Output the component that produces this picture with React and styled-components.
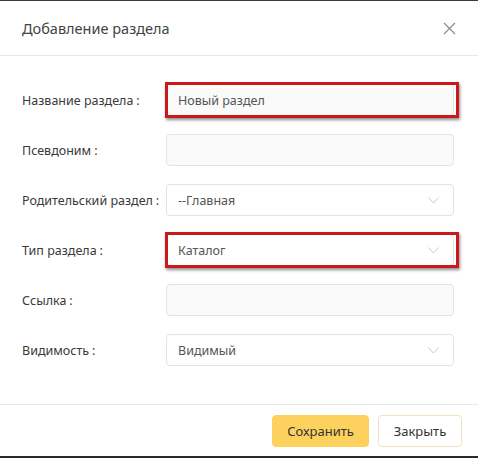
import React from 'react';
import styled, { createGlobalStyle } from 'styled-components';

const GlobalStyle = createGlobalStyle`
	*, *::before, *::after {
		box-sizing: border-box;
	}
	html, body {
		margin: 0;
		padding: 0;
		background: #fff;
	}
	body {
		font-family: "Noto Sans", "Open Sans", sans-serif;
		color: #333;
	}
`;

const Modal = styled.div`
	width: 478px;
	height: 458px;
	border-top: 1px solid #3c3c3c;
	border-bottom: 2px solid #2a2a2a;
	display: flex;
	flex-direction: column;
	background: #fff;
`;

const Header = styled.div`
	height: 55px;
	flex-shrink: 0;
	display: flex;
	align-items: center;
	justify-content: space-between;
	padding: 0 21px 0 22px;
	border-bottom: 1px solid #e8e8e8;
`;

const Title = styled.div`
	font-size: 14.5px;
	color: #444;
`;

const CloseButton = styled.button`
	border: 0;
	background: none;
	padding: 0;
	width: 16px;
	height: 16px;
	display: flex;
	align-items: center;
	justify-content: center;
	cursor: pointer;
`;

const Body = styled.div`
	flex: 1;
	display: flex;
	flex-direction: column;
	gap: 18px;
	padding: 28px 24px 0 22px;
`;

const Row = styled.div`
	display: flex;
	align-items: center;
	height: 32px;
`;

const Label = styled.label`
	width: 144px;
	font-size: 12.5px;
	color: #3a3a3a;
	white-space: nowrap;

	> span {
		margin-left: 3px;
	}
`;

const Field = styled.div`
	position: relative;
	flex: 1;
	height: 32px;

	${p => p.$marked && `
		&::after {
			content: '';
			position: absolute;
			left: -1px;
			right: -5px;
			top: -2px;
			bottom: -2px;
			border: 3px solid #c8191c;
			box-shadow: 1px 2px 3px rgba(0, 0, 0, 0.45);
			pointer-events: none;
		}
	`}
`;

const Input = styled.div`
	height: 32px;
	display: flex;
	align-items: center;
	justify-content: space-between;
	padding: 0 14px 0 11px;
	border: 1px solid #e3e3e3;
	border-radius: 4px;
	background: ${p => (p.$select ? '#fff' : '#fafafa')};
	font-size: 12.5px;
	color: #555;
`;

const Footer = styled.div`
	height: 52px;
	flex-shrink: 0;
	border-top: 1px solid #e8e8e8;
	display: flex;
	align-items: flex-start;
	justify-content: flex-end;
	gap: 9px;
	padding: 10px 16px 0 0;
`;

const Button = styled.button`
	height: 32px;
	padding: 0;
	width: ${p => p.$w}px;
	border-radius: 4px;
	font-family: inherit;
	font-size: 13px;
	color: #333;
	cursor: pointer;
	border: 1px solid ${p => (p.$primary ? '#fcd15d' : '#efe2bd')};
	background: ${p => (p.$primary ? '#fcd15d' : '#fff')};
`;

const Chevron = () => (
	<svg width="11" height="7" viewBox="0 0 11 7">
		<path d="M0.5 0.5 L5.5 6 L10.5 0.5" fill="none" stroke="#c8c8c8" strokeWidth="1" />
	</svg>
);

const rows = [
	{ label: 'Название раздела', value: 'Новый раздел', marked: true },
	{ label: 'Псевдоним', value: '' },
	{ label: 'Родительский раздел', value: '--Главная', select: true },
	{ label: 'Тип раздела', value: 'Каталог', select: true, marked: true },
	{ label: 'Ссылка', value: '' },
	{ label: 'Видимость', value: 'Видимый', select: true },
];

export default function App() {
	return (
		<>
			<GlobalStyle />
			<Modal>
				<Header>
					<Title>Добавление раздела</Title>
					<CloseButton>
						<svg width="13" height="13" viewBox="0 0 13 13">
							<path d="M1 1 L12 12 M12 1 L1 12" stroke="#8c8c8c" strokeWidth="1.2" />
						</svg>
					</CloseButton>
				</Header>
				<Body>
					{rows.map(r => (
						<Row key={r.label}>
							<Label>
								{r.label}<span>:</span>
							</Label>
							<Field $marked={r.marked}>
								<Input $select={r.select}>
									<span>{r.value}</span>
									{r.select && <Chevron />}
								</Input>
							</Field>
						</Row>
					))}
				</Body>
				<Footer>
					<Button $primary $w={97}>Сохранить</Button>
					<Button $w={84}>Закрыть</Button>
				</Footer>
			</Modal>
		</>
	);
}
